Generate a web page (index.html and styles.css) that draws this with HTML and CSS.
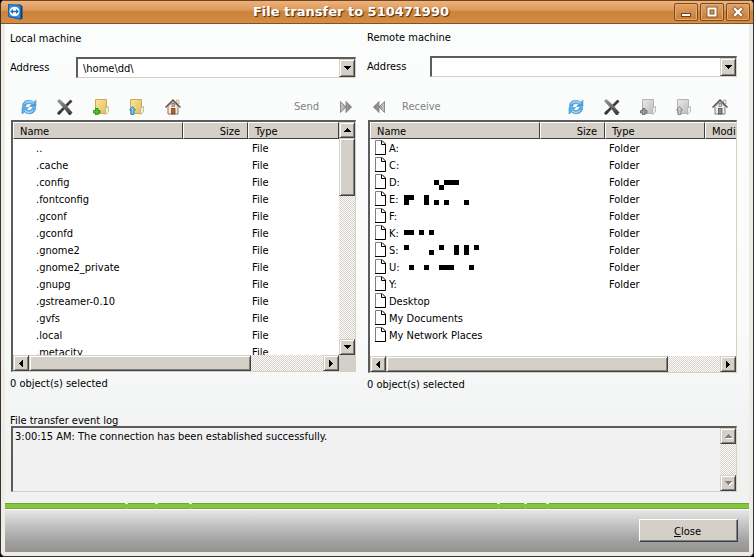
FILE: index.html
```html
<!DOCTYPE html>
<html lang="en">
<head>
  <meta charset="UTF-8">
  <title>File transfer to 510471990</title>
  <link rel="stylesheet" href="styles.css">
</head>
<body>

<!-- shared icons -->
<svg class="defs" width="0" height="0" aria-hidden="true">
  <defs>
    <linearGradient id="blue" x1="0" y1="0" x2="0" y2="1">
      <stop offset="0" stop-color="#6fbdf0"/><stop offset="1" stop-color="#3f92d6"/>
    </linearGradient>
    <linearGradient id="iron" x1="0" y1="0" x2="0" y2="1">
      <stop offset="0" stop-color="#a0a0a0"/><stop offset="1" stop-color="#333"/>
    </linearGradient>
    <linearGradient id="yellow" x1="0" y1="0" x2="1" y2="1">
      <stop offset="0" stop-color="#f9e6a4"/><stop offset="1" stop-color="#e5bd56"/>
    </linearGradient>
    <linearGradient id="grey" x1="0" y1="0" x2="1" y2="1">
      <stop offset="0" stop-color="#e9e9e9"/><stop offset="1" stop-color="#bdbdbd"/>
    </linearGradient>
    <linearGradient id="arrow" x1="0" y1="0" x2="1" y2="0">
      <stop offset="0" stop-color="#c8c8c8"/><stop offset="1" stop-color="#777"/>
    </linearGradient>
    <symbol id="refresh" viewBox="0 0 16 16">
      <path d="M1.500 7.500V5.500C2.500 2.500 5 1 8 1.300C10 1.400 11.500 2 12.500 3L15 1V7.500H8.500L10.500 5.300C8.500 3.800 5.500 4.200 4.500 7.500Z" fill="url(#blue)" stroke="#5a9ccc" stroke-width=".6"/>
      <path d="M14.500 8.500V10.500C13.500 13.500 11 15 8 14.700C6 14.600 4.500 14 3.500 13L1 15V8.500H7.500L5.500 10.700C7.500 12.200 10.500 11.800 11.500 8.500Z" fill="#58b2ee" stroke="#3f86bd" stroke-width=".6"/>
      <path d="M3 5.500C4.500 2.800 9 1.500 12.500 4.500M4 11.800C6.500 14 10 13.800 12 11.500" fill="none" stroke="#c5e8fc" stroke-width="1"/>
    </symbol>
    <symbol id="delete" viewBox="0 0 16 16">
      <path d="M1.500 14.500L14.500 1.500" stroke="#3c3c3c" stroke-width="2.600"/>
      <path d="M0 2L2.500 0L8.500 5.500L15.500 13.500L13.500 16H12L7 9.500Z" fill="url(#iron)"/>
      <path d="M0 14.500L2 16L4.500 13.500L2.500 11.500Z" fill="#333"/>
    </symbol>
    <symbol id="house" viewBox="0 0 16 16">
      <path d="M11.500 1H14V5H11.500Z" fill="#f2e6dc" stroke="#a08a80" stroke-width=".5"/>
      <path d="M3 7.500L8 2.500L13 7.500V15H3Z" fill="#f4e8da" stroke="#8d7464" stroke-width="1"/>
      <path d="M.5 8.500L8 1L15.500 8.500" fill="none" stroke="#6a4c42" stroke-width="1.400"/>
      <rect x="7" y="4.500" width="2.500" height="3" fill="#8cc4ec" stroke="#8a5030" stroke-width=".6"/>
      <rect x="6.500" y="9.500" width="3.500" height="5.500" fill="#b5652b" stroke="#6e3712" stroke-width=".7"/>
    </symbol>
    <symbol id="house-grey" viewBox="0 0 16 16">
      <path d="M11.500 1H14V5H11.500Z" fill="#eee" stroke="#777" stroke-width=".5"/>
      <path d="M3 7.500L8 2.500L13 7.500V15H3Z" fill="#ececec" stroke="#808080" stroke-width="1"/>
      <path d="M.5 8.500L8 1L15.500 8.500" fill="none" stroke="#505050" stroke-width="1.400"/>
      <rect x="7" y="4.500" width="2.500" height="3" fill="#ccc" stroke="#666" stroke-width=".6"/>
      <rect x="6.500" y="9.500" width="3.500" height="5.500" fill="#888" stroke="#444" stroke-width=".7"/>
    </symbol>
    <symbol id="forward" viewBox="0 0 12 12">
      <path d="M.5 .5L6 6L.5 11.500ZM6 .5L11.500 6L6 11.500Z" fill="url(#arrow)" stroke="#777" stroke-width=".8"/>
    </symbol>
    <symbol id="page" viewBox="0 0 11 15">
      <path d="M.5 14V.5H7" fill="#fff" stroke="#808080"/>
      <path d="M7 .5L10.500 4V14.500H0" fill="none" stroke="#000"/>
      <path d="M6.500 1V4.500H10" fill="none" stroke="#000"/>
    </symbol>
    <symbol id="up" viewBox="0 0 7 4"><path d="M3 0H4V1H5V2H6V3H7V4H0V3H1V2H2V1H3Z" fill="currentColor"/></symbol>
    <symbol id="down" viewBox="0 0 7 4"><path d="M0 0H7V1H6V2H5V3H4V4H3V3H2V2H1V1H0Z" fill="currentColor"/></symbol>
    <symbol id="left" viewBox="0 0 4 7"><path d="M4 0V7H3V6H2V5H1V4H0V3H1V2H2V1H3V0Z" fill="currentColor"/></symbol>
    <symbol id="right" viewBox="0 0 4 7"><path d="M0 0V7H1V6H2V5H3V4H4V3H3V2H2V1H1V0Z" fill="currentColor"/></symbol>
  </defs>
</svg>

<div class="window">
  <header class="titlebar">
    <svg class="app-icon" width="16" height="16" viewBox="0 0 16 16">
      <path d="M2 1L12.500 .5L14.500 2.500V15L12 15.500L1.500 13Z" fill="#0d3e79"/>
      <path d="M.5 .5L12.500 1.500V15L.5 12.500Z" fill="#2f8ae0" stroke="#1762ad"/>
      <ellipse cx="6.500" cy="7.500" rx="5" ry="4.800" fill="#fff"/>
      <path d="M2 7.500L5 5V6.800H8V5L11 7.500L8 10V8.300H5V10Z" fill="#1c6fc4"/>
    </svg>
    <h1>File transfer to 510471990</h1>
    <div class="window-buttons">
      <button aria-label="Minimize"><svg width="22" height="16" viewBox="0 0 22 16"><rect x="6.500" y="9.500" width="9" height="3" fill="#fff" stroke="#6e4119"/></svg></button>
      <button aria-label="Maximize"><svg width="22" height="16" viewBox="0 0 22 16"><rect x="7.500" y="4.500" width="7" height="7" fill="none" stroke="#8a5a2c" stroke-width="4"/><rect x="7.500" y="4.500" width="7" height="7" fill="none" stroke="#fff" stroke-width="2"/></svg></button>
      <button aria-label="Close window"><svg width="22" height="16" viewBox="0 0 22 16"><path d="M8 5L14 11M14 5L8 11" stroke="#8a5a2c" stroke-width="4" stroke-linecap="square"/><path d="M8 5L14 11M14 5L8 11" stroke="#fff" stroke-width="2.400" stroke-linecap="square"/></svg></button>
    </div>
  </header>

  <main class="content">
    <div class="panes">
      <section class="pane local">
        <h2>Local machine</h2>
        <div class="address">
          <label for="local-address">Address</label>
          <div class="combo">
            <select id="local-address"><option>\home\dd\</option></select>
            <span class="bevel drop"><svg width="7" height="4"><use href="#down"/></svg></span>
          </div>
        </div>
        <div class="toolbar">
          <button aria-label="Refresh"><svg width="16" height="16"><use href="#refresh"/></svg></button>
          <button aria-label="Delete"><svg width="16" height="16"><use href="#delete"/></svg></button>
          <button aria-label="New folder">
            <svg width="16" height="16" viewBox="0 0 16 16">
              <path d="M2.500 .5H13.500V14.500H2.500Z" fill="url(#yellow)" stroke="#cfa94f"/>
              <path d="M12.500 9L15.500 7.500V13L12.500 15.500Z" fill="#e4f3fb" stroke="#c3a860" stroke-width=".7"/>
              <path d="M2.500 9.500H5V11.500H7V14H5V16H2.500V14H.5V11.500H2.500Z" fill="#45c336" stroke="#1d8718" stroke-width=".8"/>
            </svg>
          </button>
          <button aria-label="Folder up">
            <svg width="16" height="16" viewBox="0 0 16 16">
              <path d="M1.500 .5H12.500V14.500H1.500Z" fill="url(#yellow)" stroke="#cfa94f"/>
              <path d="M11.500 9L14.500 7.500V13L11.500 15.500Z" fill="#e4f3fb" stroke="#c3a860" stroke-width=".7"/>
              <path d="M3.500 7.500L6.500 11H5V15.500H2V11H.5Z" fill="#6ac5f8" stroke="#2878b4" stroke-width=".8"/>
            </svg>
          </button>
          <button aria-label="Home"><svg width="16" height="16"><use href="#house"/></svg></button>
          <button class="transfer" disabled>Send <svg width="12" height="12"><use href="#forward"/></svg></button>
        </div>
        <div class="list">
          <div class="view">
            <table>
              <colgroup><col class="col-name"><col class="col-size"><col class="col-type"></colgroup>
              <thead><tr><th>Name</th><th class="size">Size</th><th>Type</th></tr></thead>
              <tbody>
                <tr><td>..</td><td></td><td>File</td></tr>
                <tr><td>.cache</td><td></td><td>File</td></tr>
                <tr><td>.config</td><td></td><td>File</td></tr>
                <tr><td>.fontconfig</td><td></td><td>File</td></tr>
                <tr><td>.gconf</td><td></td><td>File</td></tr>
                <tr><td>.gconfd</td><td></td><td>File</td></tr>
                <tr><td>.gnome2</td><td></td><td>File</td></tr>
                <tr><td>.gnome2_private</td><td></td><td>File</td></tr>
                <tr><td>.gnupg</td><td></td><td>File</td></tr>
                <tr><td>.gstreamer-0.10</td><td></td><td>File</td></tr>
                <tr><td>.gvfs</td><td></td><td>File</td></tr>
                <tr><td>.local</td><td></td><td>File</td></tr>
                <tr><td>.metacity</td><td></td><td>File</td></tr>
              </tbody>
            </table>
          </div>
          <div class="scroll vertical">
            <button class="bevel" aria-label="Scroll up"><svg width="7" height="4"><use href="#up"/></svg></button>
            <div class="bevel thumb"></div>
            <button class="bevel last" aria-label="Scroll down"><svg width="7" height="4"><use href="#down"/></svg></button>
          </div>
          <div class="scroll horizontal">
            <button class="bevel" aria-label="Scroll left"><svg width="4" height="7"><use href="#left"/></svg></button>
            <div class="bevel thumb"></div>
            <button class="bevel last" aria-label="Scroll right"><svg width="4" height="7"><use href="#right"/></svg></button>
          </div>
          <div class="corner"></div>
        </div>
        <p class="status">0 object(s) selected</p>
      </section>

      <section class="pane remote">
        <h2>Remote machine</h2>
        <div class="address">
          <label for="remote-address">Address</label>
          <div class="combo">
            <select id="remote-address"><option></option></select>
            <span class="bevel drop"><svg width="7" height="4"><use href="#down"/></svg></span>
          </div>
        </div>
        <div class="toolbar">
          <button class="transfer" disabled><svg class="flip" width="12" height="12"><use href="#forward"/></svg> Receive</button>
          <button aria-label="Refresh"><svg width="16" height="16"><use href="#refresh"/></svg></button>
          <button aria-label="Delete"><svg width="16" height="16"><use href="#delete"/></svg></button>
          <button aria-label="New folder" disabled>
            <svg width="16" height="16" viewBox="0 0 16 16">
              <path d="M2.500 .5H13.500V14.500H2.500Z" fill="url(#grey)" stroke="#b4b4b4"/>
              <path d="M12.500 9L15.500 7.500V13L12.500 15.500Z" fill="#eee" stroke="#aaa" stroke-width=".7"/>
              <path d="M2.500 9.500H5V11.500H7V14H5V16H2.500V14H.5V11.500H2.500Z" fill="#999" stroke="#666" stroke-width=".8"/>
            </svg>
          </button>
          <button aria-label="Folder up" disabled>
            <svg width="16" height="16" viewBox="0 0 16 16">
              <path d="M1.500 .5H12.500V14.500H1.500Z" fill="url(#grey)" stroke="#b4b4b4"/>
              <path d="M11.500 9L14.500 7.500V13L11.500 15.500Z" fill="#eee" stroke="#aaa" stroke-width=".7"/>
              <path d="M3.500 7.500L6.500 11H5V15.500H2V11H.5Z" fill="#ccc" stroke="#777" stroke-width=".8"/>
            </svg>
          </button>
          <button aria-label="Home" disabled><svg width="16" height="16"><use href="#house-grey"/></svg></button>
        </div>
        <div class="list">
          <div class="view">
            <table>
              <colgroup><col class="col-name"><col class="col-size"><col class="col-type"><col class="col-modified"></colgroup>
              <thead><tr><th>Name</th><th class="size">Size</th><th>Type</th><th>Modified</th></tr></thead>
              <tbody>
                <tr><td><div class="item"><svg width="11" height="15"><use href="#page"/></svg><span>A:</span></div></td><td></td><td>Folder</td><td></td></tr>
                <tr><td><div class="item"><svg width="11" height="15"><use href="#page"/></svg><span>C:</span></div></td><td></td><td>Folder</td><td></td></tr>
                <tr><td><div class="item"><svg width="11" height="15"><use href="#page"/></svg><span>D:</span><svg width="80" height="17"><path d="M30 7h5v5h-5zM40 7h15v5h-15zM35 12h5v5h-5z"/></svg></div></td><td></td><td>Folder</td><td></td></tr>
                <tr><td><div class="item"><svg width="11" height="15"><use href="#page"/></svg><span>E:</span><svg width="80" height="17"><path d="M0 5h10v5h-5v5h-5zM20 5h5v10h-5zM30 10h5v5h-5zM40 10h5v5h-5zM60 10h5v5h-5z"/></svg></div></td><td></td><td>Folder</td><td></td></tr>
                <tr><td><div class="item"><svg width="11" height="15"><use href="#page"/></svg><span>F:</span></div></td><td></td><td>Folder</td><td></td></tr>
                <tr><td><div class="item"><svg width="11" height="15"><use href="#page"/></svg><span>K:</span><svg width="80" height="17"><path d="M0 6h10v5h-10zM15 6h5v5h-5zM25 6h5v5h-5z"/></svg></div></td><td></td><td>Folder</td><td></td></tr>
                <tr><td><div class="item"><svg width="11" height="15"><use href="#page"/></svg><span>S:</span><svg width="80" height="17"><path d="M0 4h5v5h-5zM25 9h5v5h-5zM35 4h5v5h-5zM50 4h5v10h-5zM60 4h5v10h-5zM70 4h5v5h-5z"/></svg></div></td><td></td><td>Folder</td><td></td></tr>
                <tr><td><div class="item"><svg width="11" height="15"><use href="#page"/></svg><span>U:</span><svg width="80" height="17"><path d="M5 7h5v5h-5zM20 7h5v5h-5zM35 7h15v5h-15zM65 7h5v5h-5z"/></svg></div></td><td></td><td>Folder</td><td></td></tr>
                <tr><td><div class="item"><svg width="11" height="15"><use href="#page"/></svg><span>Y:</span></div></td><td></td><td>Folder</td><td></td></tr>
                <tr><td><div class="item"><svg width="11" height="15"><use href="#page"/></svg><span>Desktop</span></div></td><td></td><td></td><td></td></tr>
                <tr><td><div class="item"><svg width="11" height="15"><use href="#page"/></svg><span>My Documents</span></div></td><td></td><td></td><td></td></tr>
                <tr><td><div class="item"><svg width="11" height="15"><use href="#page"/></svg><span>My Network Places</span></div></td><td></td><td></td><td></td></tr>
              </tbody>
            </table>
          </div>
          <div class="scroll horizontal">
            <button class="bevel" aria-label="Scroll left"><svg width="4" height="7"><use href="#left"/></svg></button>
            <div class="bevel thumb"></div>
            <button class="bevel last" aria-label="Scroll right"><svg width="4" height="7"><use href="#right"/></svg></button>
          </div>
        </div>
        <p class="status">0 object(s) selected</p>
      </section>
    </div>

    <label class="log-label" for="log">File transfer event log</label>
    <div class="log">
      <textarea id="log" readonly>3:00:15 AM: The connection has been established successfully.</textarea>
      <div class="scroll vertical">
        <button class="bevel" aria-label="Scroll log up" disabled><svg width="7" height="4"><use href="#up"/></svg></button>
        <button class="bevel last" aria-label="Scroll log down" disabled><svg width="7" height="4"><use href="#down"/></svg></button>
      </div>
    </div>
  </main>

  <div class="stripe"><i></i><i></i><i></i><i></i><i></i><i></i></div>
  <footer class="footer">
    <button class="close"><u>C</u>lose</button>
  </footer>
</div>

</body>
</html>
```
FILE: styles.css
```css
* {
  box-sizing: border-box;
}
body {
  margin: 0;
  background: #000;
  color: #000;
  font: 11px/16px "DejaVu Sans Condensed", "Noto Sans", sans-serif;
}
h1, h2, p {
  margin: 0;
  font-size: inherit;
  font-weight: normal;
}
button, select, textarea {
  font: inherit;
  color: inherit;
  margin: 0;
  padding: 0;
  border: 0;
  border-radius: 0;
  background: none;
}
svg {
  display: block;
  flex: none;
}
.defs {
  position: absolute;
}

/* window frame */
.window {
  display: flex;
  flex-direction: column;
  min-height: 100vh;
  padding: 0 4px 4px;
  background: #efebe7;
  border: 1px solid #3a3431;
  border-top: 0;
  border-radius: 5px;
  overflow: hidden;
}
.titlebar {
  display: flex;
  align-items: center;
  height: 24px;
  margin: 0 -4px;
  padding: 0 3px 0 7px;
  border-top: 1px solid #6b4423;
  border-bottom: 1px solid #84511f;
  background: linear-gradient(#eeb27b 0, #dd9a5c 40%, #cb8239 50%, #d58d47 100%);
}
.titlebar h1 {
  flex: 1;
  padding-left: 4px;
  text-align: center;
  font: bold 13px/20px "DejaVu Sans", sans-serif;
  color: #fff;
  text-shadow: 1px 1px 1px #4a2a0c;
}
.window-buttons {
  display: flex;
  gap: 2px;
}
.window-buttons button {
  width: 24px;
  height: 18px;
  border: 1px solid #7b4b1e;
  border-radius: 2px;
  background: linear-gradient(#e2a268, #c77d35);
  box-shadow: inset 0 0 0 1px #e5aa73;
}

/* panes */
.content {
  flex: 1;
  padding: 6px 12px 11px 5px;
  background: linear-gradient(#fbfcfc 0, #fafbfb 60%, #f0f1f1 90%);
}
.panes {
  display: flex;
  gap: 11px;
}
.pane {
  min-width: 0;
}
.local {
  flex: 346 1 0;
}
.remote {
  flex: 370 1 0;
}
.local h2 {
  padding-top: 1px;
}
.address {
  display: flex;
  align-items: center;
  margin-top: 10px;
}
.remote .address {
  margin-bottom: 22px;
}
.address label {
  width: 66px;
}
.remote .address label {
  width: 63px;
}
.combo {
  position: relative;
  flex: 1;
  height: 21px;
  border: 2px solid;
  border-color: #5c5c5c #d4d0c8 #d4d0c8 #5c5c5c;
  border-width: 2px 1px 1px 2px;
  background: #fff;
}
.combo select {
  display: block;
  width: 100%;
  height: 18px;
  padding: 2px 20px 0 5px;
  appearance: none;
}
.drop {
  position: absolute;
  top: 0;
  right: 0;
  width: 16px;
  height: 18px;
  pointer-events: none;
}
.bevel {
  display: flex;
  align-items: center;
  justify-content: center;
  background: #d4d0c8;
  border: 1px solid;
  border-color: #d4d0c8 #404040 #404040 #d4d0c8;
  box-shadow: inset 1px 1px #fff, inset -1px -1px #808080;
}

.toolbar {
  display: flex;
  align-items: center;
  gap: 20px;
  height: 16px;
  margin-top: 21px;
  padding-left: 11px;
}
.transfer {
  display: flex;
  align-items: center;
  gap: 21px;
  color: #808080;
}
.local .transfer {
  margin: 0 4px 0 auto;
}
.remote .toolbar {
  padding: 0 9px 0 6px;
}
.remote .transfer {
  gap: 17px;
  margin-right: auto;
}
.flip {
  transform: scaleX(-1);
}

/* file lists */
.list {
  display: grid;
  grid-template-columns: 1fr auto;
  grid-template-rows: 1fr 16px;
  height: 252px;
  margin: 5px 0 0 1px;
  border: 2px solid;
  border-width: 2px 1px 1px 2px;
  border-color: #5c5c5c #d4d0c8 #d4d0c8 #5c5c5c;
  background: #fff;
}
.remote .list {
  height: 253px;
}
.view {
  min-width: 0;
  overflow: hidden;
}
.remote .view, .remote .horizontal {
  grid-column: 1 / 3;
}
table {
  width: 100%;
  table-layout: fixed;
  border-collapse: separate;
  border-spacing: 0;
}
.remote table {
  width: 400px;
}
.col-name {
  width: 170px;
}
.col-size {
  width: 65px;
}
.remote .col-type {
  width: 100px;
}
th, td {
  height: 17px;
  padding: 2px 0 0;
  text-align: left;
  font-weight: normal;
  white-space: nowrap;
}
th {
  padding-left: 6px;
  line-height: 13px;
  background: #d4d0c8;
  border: 1px solid;
  border-color: #fff #404040 #404040 #fff;
}
th.size {
  padding-right: 7px;
  text-align: right;
}
td {
  padding-left: 4px;
  line-height: 15px;
}
.local td:first-child {
  padding-left: 23px;
}
.remote td:first-child {
  padding-top: 0;
}
.item {
  display: flex;
  align-items: center;
  gap: 3px;
  height: 17px;
  padding-left: 1px;
}
.item span {
  min-width: 12px;
  padding-top: 2px;
}
.status {
  margin-top: 4px;
}

/* scrollbars */
.scroll {
  display: flex;
  background: repeating-conic-gradient(#d4d0c8 0 25%, #fff 0 50%) 0 0 / 2px 2px;
}
.vertical {
  flex-direction: column;
  width: 16px;
}
.scroll button {
  flex: none;
  width: 16px;
  height: 16px;
}
.vertical .last {
  margin-top: auto;
}
.horizontal .last {
  margin-left: auto;
}
.vertical .thumb {
  height: 58px;
}
.local .horizontal .thumb {
  width: 68%;
}
.remote .horizontal .thumb {
  width: 77%;
}
.corner {
  background: #d4d0c8;
}
.scroll button:disabled {
  color: #808080;
}
.scroll button:disabled svg {
  filter: drop-shadow(1px 1px 0 #fff);
}

/* event log */
.log-label {
  display: block;
  margin: 22px 0 -1px;
  line-height: 12px;
}
.log {
  display: flex;
  height: 66px;
  margin-left: 1px;
  border: 2px solid;
  border-width: 2px 1px 1px 2px;
  border-color: #5c5c5c #d4d0c8 #d4d0c8 #5c5c5c;
  background: #f1f1f1;
}
.log textarea {
  flex: 1;
  padding: 1px 2px 0;
  resize: none;
  overflow: hidden;
  outline: 0;
}

/* footer */
.stripe {
  display: flex;
  height: 6px;
  padding-left: 120px;
  background: linear-gradient(#6fa63a 0 1px, #84c63c 1px 5px, #6fa63a 5px);
}
.stripe i {
  width: 3px;
  height: 7px;
  background: linear-gradient(#e8f0e0 0 1px, #84c63c 1px 6px, #5d9a28 6px);
  margin-right: 27px;
}
.stripe i:nth-child(2) {
  margin-right: 31px;
}
.stripe i:nth-child(3) {
  margin-right: 305px;
}
.stripe i:nth-child(4) {
  margin-right: 24px;
}
.stripe i:nth-child(5) {
  margin-right: 19px;
}
.footer {
  display: flex;
  justify-content: flex-end;
  padding: 9px 11px 10px;
  border-top: 1px solid #fff;
  background: linear-gradient(#e6e6e6, #c4c4c4 35%, #a0a0a0 75%, #939393);
}
.close {
  width: 99px;
  height: 23px;
  padding: 2px 2px 0 0;
  background: #d4d0c8;
  border: 1px solid;
  border-color: #fff #404040 #404040 #fff;
  box-shadow: inset -1px -1px #808080;
}
```
